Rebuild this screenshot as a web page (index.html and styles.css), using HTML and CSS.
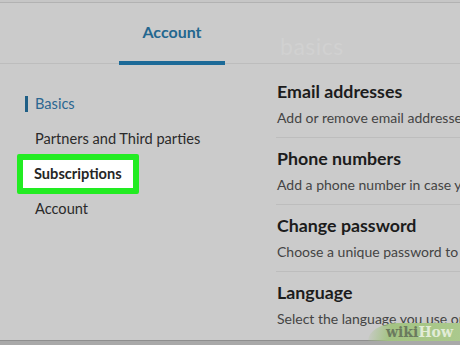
FILE: index.html
```html
<!DOCTYPE html>
<html>
<head>
<meta charset="utf-8">
<link rel="stylesheet" href="styles.css">
</head>
<body>
<div class="topline"></div>
<header class="tabs">
  <div class="tab active">Account</div>
  <div class="ghost">basics</div>
</header>
<main class="main">
  <nav class="nav">
    <div class="item current">Basics</div>
    <div class="item">Partners and Third parties</div>
    <div class="item highlight">Subscriptions</div>
    <div class="item">Account</div>
  </nav>
  <section class="content">
    <div class="row">
      <div class="title">Email addresses</div>
      <div class="sub">Add or remove email addresses</div>
    </div>
    <div class="row">
      <div class="title">Phone numbers</div>
      <div class="sub">Add a phone number in case you</div>
    </div>
    <div class="row">
      <div class="title">Change password</div>
      <div class="sub">Choose a unique password to</div>
    </div>
    <div class="row last">
      <div class="title">Language</div>
      <div class="sub">Select the language you use on</div>
    </div>
  </section>
</main>
<div class="bottombar"></div>
<div class="wm"><span class="wiki">wiki</span><span class="how">How</span></div>
</body>
</html>
```
FILE: styles.css
```css
html, body {
  margin: 0;
  padding: 0;
  width: 460px;
  height: 345px;
  overflow: hidden;
  background: #cbcbcb;
  font-family: Lato, "Liberation Sans", sans-serif;
  position: relative;
}
.topline {
  height: 2px;
  background: #c6c6c6;
  border-bottom: 1px solid #b2b2b2;
}
.tabs {
  display: flex;
  align-items: stretch;
  border-bottom: 1px solid #bdbdbd;
  box-sizing: border-box;
  height: 61px;
}
.tab {
  margin-left: 119px;
  width: 106px;
  box-sizing: border-box;
  text-align: center;
  font-size: 16px;
  font-weight: 700;
  color: #23678f;
  padding-top: 19px;
  border-bottom: 4px solid #1c6a98;
  margin-bottom: -2px;
}
.ghost {
  margin-left: 55px;
  padding-top: 29px;
  font-size: 23px;
  font-weight: 400;
  color: #d1d1d1;
  letter-spacing: 0.5px;
}
.main {
  display: flex;
  height: 277px;
}
.nav {
  width: 276px;
  flex: none;
  padding-top: 22px;
  box-sizing: border-box;
}
.item {
  height: 35px;
  display: flex;
  align-items: center;
  padding-left: 35px;
  font-size: 14.6px;
  color: #2a2a2a;
  box-sizing: border-box;
  white-space: nowrap;
}
.item.current {
  padding-left: 25px;
  color: #2b6791;
}
.item.current::before {
  content: "";
  width: 3px;
  height: 16px;
  background: #1f5f86;
  margin-right: 7px;
}
.item.highlight {
  width: 122px;
  height: 40px;
  margin: -2.5px 0 -2.5px 17px;
  padding-left: 11px;
  border: 6px solid #22ec22;
  border-radius: 2px;
  background: #ffffff;
  font-weight: 700;
  color: #262626;
}
.content {
  flex: 1;
  min-width: 0;
  overflow: hidden;
  padding-top: 7px;
}
.row {
  padding: 10px 0 10px 1px;
  border-bottom: 1px solid #bdbdbd;
}
.row.last {
  border-bottom: none;
}
.title {
  font-size: 17.8px;
  font-weight: 700;
  line-height: 20px;
  color: #1c1c1c;
  white-space: nowrap;
}
.sub {
  margin-top: 8px;
  font-size: 14px;
  line-height: 18px;
  color: #444444;
  white-space: nowrap;
}
.bottombar {
  position: absolute;
  left: 0;
  right: 0;
  bottom: 0;
  height: 4px;
  background: #a9a9a9;
  border-top: 1px solid #8f8f8f;
}
.wm {
  position: absolute;
  right: 0;
  bottom: 4px;
  width: 92px;
  height: 18px;
  padding-left: 18px;
  box-sizing: border-box;
  background: linear-gradient(100deg, rgba(203,203,203,0) 0%, #a3c383 25%, #abc98d 100%);
  border-top-left-radius: 30px 18px;
  font-family: "DejaVu Serif", serif;
  font-weight: 700;
  font-size: 14px;
  line-height: 18px;
}
.wiki { color: #6b7a5e; }
.how { color: #e2ecd8; }
```
